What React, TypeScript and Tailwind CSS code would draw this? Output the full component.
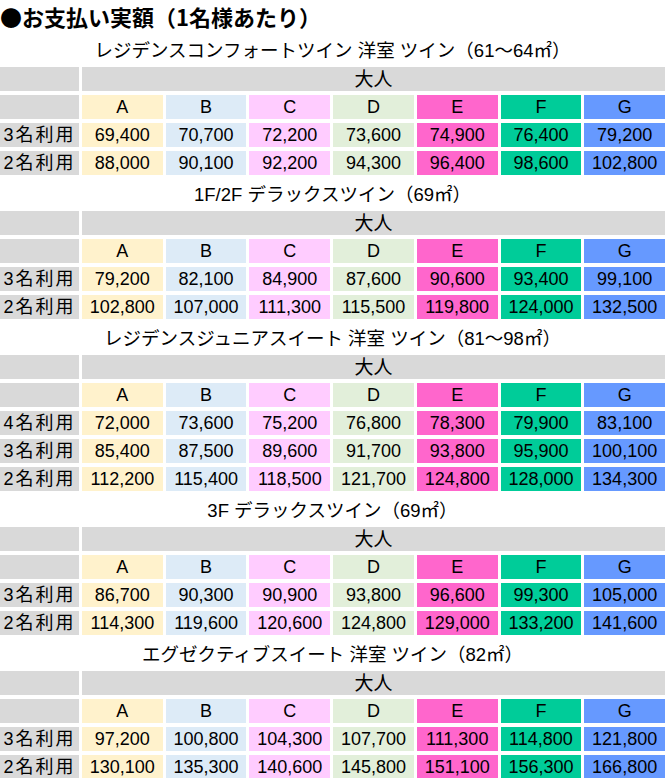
import React from "react";

type Section = {
  caption: string;
  rows: { label: string; prices: string[] }[];
};

const sections: Section[] = [
  {
    caption: "レジデンスコンフォートツイン 洋室 ツイン（61～64㎡）",
    rows: [
      { label: "3名利用", prices: ["69,400", "70,700", "72,200", "73,600", "74,900", "76,400", "79,200"] },
      { label: "2名利用", prices: ["88,000", "90,100", "92,200", "94,300", "96,400", "98,600", "102,800"] },
    ],
  },
  {
    caption: "1F/2F デラックスツイン（69㎡）",
    rows: [
      { label: "3名利用", prices: ["79,200", "82,100", "84,900", "87,600", "90,600", "93,400", "99,100"] },
      { label: "2名利用", prices: ["102,800", "107,000", "111,300", "115,500", "119,800", "124,000", "132,500"] },
    ],
  },
  {
    caption: "レジデンスジュニアスイート 洋室 ツイン（81～98㎡）",
    rows: [
      { label: "4名利用", prices: ["72,000", "73,600", "75,200", "76,800", "78,300", "79,900", "83,100"] },
      { label: "3名利用", prices: ["85,400", "87,500", "89,600", "91,700", "93,800", "95,900", "100,100"] },
      { label: "2名利用", prices: ["112,200", "115,400", "118,500", "121,700", "124,800", "128,000", "134,300"] },
    ],
  },
  {
    caption: "3F デラックスツイン（69㎡）",
    rows: [
      { label: "3名利用", prices: ["86,700", "90,300", "90,900", "93,800", "96,600", "99,300", "105,000"] },
      { label: "2名利用", prices: ["114,300", "119,600", "120,600", "124,800", "129,000", "133,200", "141,600"] },
    ],
  },
  {
    caption: "エグゼクティブスイート 洋室 ツイン（82㎡）",
    rows: [
      { label: "3名利用", prices: ["97,200", "100,800", "104,300", "107,700", "111,300", "114,800", "121,800"] },
      { label: "2名利用", prices: ["130,100", "135,300", "140,600", "145,800", "151,100", "156,300", "166,800"] },
    ],
  },
];

const grades = ["A", "B", "C", "D", "E", "F", "G"];

const colColors = [
  "bg-[#fff2cc]",
  "bg-[#ddebf7]",
  "bg-[#ffccff]",
  "bg-[#e2efda]",
  "bg-[#ff66cc]",
  "bg-[#00cc99]",
  "bg-[#6699ff]",
];

function PriceTable({ section }: { section: Section }) {
  return (
    <div>
      {/* caption */}
      <div className="h-[36px] flex items-center justify-center pt-1 text-[18.5px]">
        {section.caption}
      </div>
      <div className="grid grid-cols-[79px_repeat(7,1fr)] gap-x-[3px] gap-y-[4px] text-[18px]">
        {/* header */}
        <div className="h-[24px] bg-[#d9d9d9]" />
        <div className="col-span-7 h-[24px] bg-[#d9d9d9] flex items-center justify-center text-[19px]">
          大人
        </div>
        <div className="h-[24px] bg-[#d9d9d9]" />
        {grades.map((g, i) => (
          <div key={g} className={`h-[24px] flex items-center justify-center ${colColors[i]}`}>
            {g}
          </div>
        ))}
        {/* rows */}
        {section.rows.map((row) => (
          <React.Fragment key={row.label}>
            <div className="h-[24px] bg-[#d9d9d9] flex items-center justify-center tracking-[2px]">
              {row.label}
            </div>
            {row.prices.map((p, i) => (
              <div key={i} className={`h-[24px] flex items-center justify-center ${colColors[i]}`}>
                {p}
              </div>
            ))}
          </React.Fragment>
        ))}
      </div>
    </div>
  );
}

export default function App() {
  return (
    <div
      className="w-[665px] bg-white text-black leading-none"
      style={{ fontFamily: "'Liberation Sans', 'Noto Sans CJK JP', sans-serif" }}
    >
      <div className="h-[31px] flex items-center text-[22px] font-bold font-['Noto_Sans_CJK_JP',sans-serif]">
        ●お支払い実額（1名様あたり）
      </div>
      {sections.map((s) => (
        <PriceTable key={s.caption} section={s} />
      ))}
    </div>
  );
}
